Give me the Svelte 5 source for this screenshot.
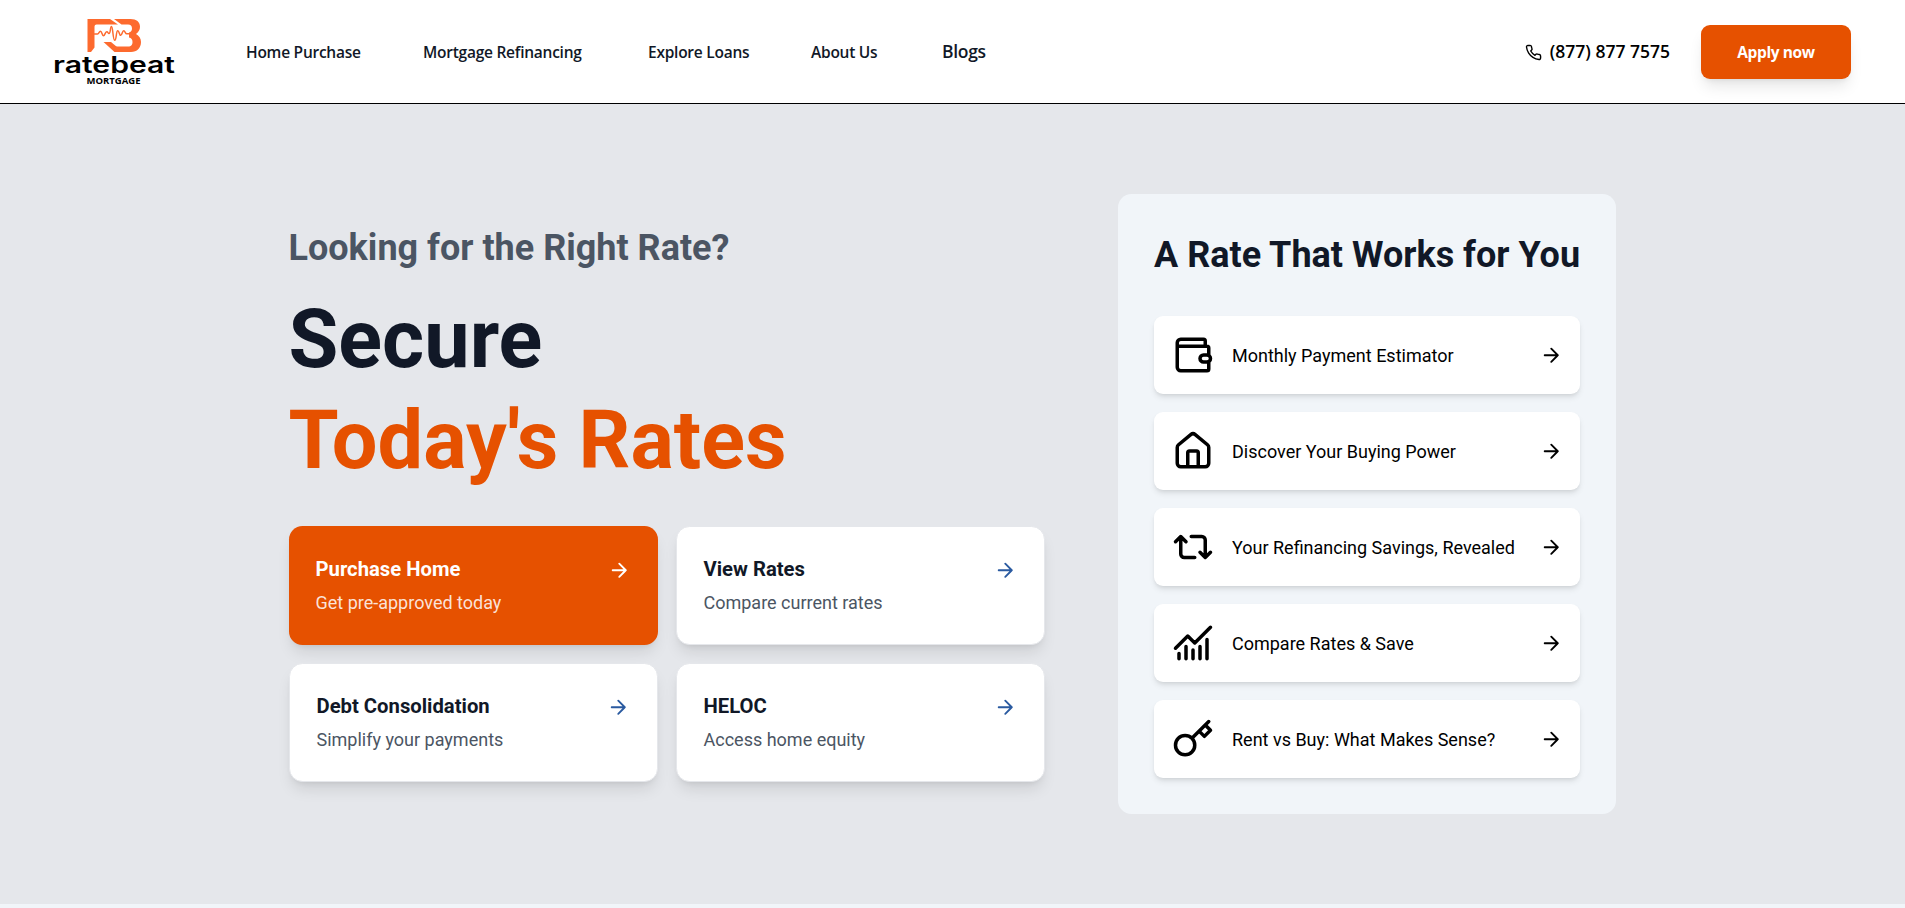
<script lang="ts">
	const links = [
		{ label: 'Home Purchase', width: 114 },
		{ label: 'Mortgage Refinancing', width: 162 },
		{ label: 'Explore Loans', width: 100 },
		{ label: 'About Us', width: 68 }
	];

	const options = [
		{ title: 'Purchase Home', text: 'Get pre-approved today', primary: true },
		{ title: 'View Rates', text: 'Compare current rates' },
		{ title: 'Debt Consolidation', text: 'Simplify your payments' },
		{ title: 'HELOC', text: 'Access home equity' }
	];

	const tools = [
		{
			label: 'Monthly Payment Estimator',
			icon: 'M19 7V4a1 1 0 0 0-1-1H5a2 2 0 0 0-2 2v14a2 2 0 0 0 2 2h15a1 1 0 0 0 1-1v-4M3 7h17a1 1 0 0 1 1 1v4M18 12h2a2 2 0 0 1 2 2v0a2 2 0 0 1-2 2h-2a2 2 0 0 1-2-2v0a2 2 0 0 1 2-2z'
		},
		{
			label: 'Discover Your Buying Power',
			icon: 'M5 21h14a2 2 0 0 0 2-2V9.97a2 2 0 0 0-.72-1.54l-7-5.83a2 2 0 0 0-2.56 0l-7 5.83A2 2 0 0 0 3 9.97V19a2 2 0 0 0 2 2zM9 21v-8a1 1 0 0 1 1-1h4a1 1 0 0 1 1 1v8'
		},
		{
			label: 'Your Refinancing Savings, Revealed',
			icon: 'M13 18H7a2 2 0 0 1-2-2V6M2 9l3-3 3 3M11 6h6a2 2 0 0 1 2 2v10M22 15l-3 3-3-3'
		},
		{
			label: 'Compare Rates & Save',
			icon: 'M2 15l7-7 4 4 9-9M4 18v3M8 14v7M12 16v5M16 14v7M20 10v11'
		},
		{
			label: 'Rent vs Buy: What Makes Sense?',
			icon: 'M2 15.5a5.5 5.5 0 1 0 11 0a5.5 5.5 0 1 0-11 0M21 2l-9.6 9.6M15.5 7.5l3 3L22 7l-3-3'
		}
	];
</script>

{#snippet arrow()}
	<svg class="arrow" viewBox="0 0 24 24" aria-hidden="true">
		<path d="M5 12h14M12 5l7 7-7 7" />
	</svg>
{/snippet}

<header>
	<a class="logo" href="/" aria-label="ratebeat mortgage">
		<svg width="122" height="72" viewBox="53 16 122 72">
			<g fill="#fd6a2e">
				<path d="M87.5 19H110l8 5.500H96.500q-2 0-2 2V47.500l-3.500 4.500h-3.500z" />
				<path d="M114 19h16.500c6 0 9.500 3 9.500 7.700 0 3-1.500 5.500-4 7.300 3 1.600 5 4.400 5 8 0 6-4 10-10 10h-11l-7-5.500H128c3.500 0 4.500-1.800 4.500-4.500 0-2.400-1.200-4-3.500-4.500v-5c2-.6 3-2 3-4 0-2.500-1.300-4-4-4h-6.500z" />
				<path d="M103.500 42h7.500l12 10h-8.500z" />
			</g>
			<path class="pulse" d="M94.500 34h3c1.500 0 1.500-2.700 3-2.700s1.500 4.500 3 4.500 1.500-4 3.200-4 1 1.700 2.300 1.700c1.800 0 1-7 2.500-7s1.300 13.800 3.200 13.800 1.300-9.500 3-9.500 1.500 4.500 3 4.500 1.500-4.500 3-4.500 1.500 3 3 3h5" />
			<text x="53" y="73" font-family="Inter, sans-serif" font-size="22.500" font-weight="600" textLength="122" lengthAdjust="spacingAndGlyphs">ratebeat</text>
			<text x="86.500" y="83.700" font-family="Open Sans, sans-serif" font-size="8.400" font-weight="bold" textLength="54" lengthAdjust="spacingAndGlyphs">MORTGAGE</text>
		</svg>
	</a>
	<nav>
		{#each links as link}
			<a href="/" style:width="{link.width}px">{link.label}</a>
		{/each}
		<a class="blogs" href="/">Blogs</a>
	</nav>
	<a class="phone" href="tel:8778777575">
		<svg viewBox="0 0 24 24" aria-hidden="true">
			<path d="M22 16.920v3a2 2 0 0 1-2.180 2 19.790 19.790 0 0 1-8.630-3.070 19.500 19.500 0 0 1-6-6 19.790 19.790 0 0 1-3.070-8.670A2 2 0 0 1 4.110 2h3a2 2 0 0 1 2 1.720 12.840 12.840 0 0 0 .7 2.810 2 2 0 0 1-.45 2.110L8.090 9.910a16 16 0 0 0 6 6l1.270-1.270a2 2 0 0 1 2.110-.45 12.840 12.840 0 0 0 2.810.7A2 2 0 0 1 22 16.920z" />
		</svg>
		<span>(877) 877 7575</span>
	</a>
	<a class="apply" href="/">Apply now</a>
</header>

<main>
	<section class="intro">
		<h2>Looking for the Right Rate?</h2>
		<h1>Secure<br /><span>Today's Rates</span></h1>
		<div class="options">
			{#each options as option}
				<a class="option" class:primary={option.primary} href="/">
					<span class="option-title">{option.title}{@render arrow()}</span>
					<span class="option-text">{option.text}</span>
				</a>
			{/each}
		</div>
	</section>

	<section class="panel">
		<h2>A Rate That Works for You</h2>
		<div class="tools">
			{#each tools as tool}
				<a class="tool" href="/">
					<svg class="tool-icon" viewBox="0 0 24 24" aria-hidden="true">
						<path d={tool.icon} />
					</svg>
					<span>{tool.label}</span>
					{@render arrow()}
				</a>
			{/each}
		</div>
	</section>
</main>

<style>
	:global(body) {
		margin: 0;
		background: #f1f5f9;
		font-family: Roboto, sans-serif;
		font-size: 18px;
		line-height: 27px;
		overflow: hidden;
	}

	a {
		color: inherit;
		text-decoration: none;
	}

	svg {
		display: block;
		flex: none;
	}

	header {
		display: flex;
		align-items: center;
		box-sizing: border-box;
		height: 104px;
		padding: 0 54px;
		background: #fff;
		border-bottom: 1px solid #000;
		font-family: 'Open Sans', sans-serif;
		font-weight: 600;
	}

	.logo {
		margin: 0 71px 0 -1px;
	}

	.pulse {
		fill: none;
		stroke: #fd6a2e;
		stroke-width: 1.5;
		stroke-linecap: round;
	}

	nav {
		display: flex;
		align-items: baseline;
		gap: 63px;
		color: #111827;
		font-size: 15.5px;
		letter-spacing: -0.25px;
		white-space: nowrap;
	}

	.blogs {
		font-size: 17.5px;
		letter-spacing: -0.3px;
	}

	.phone {
		display: flex;
		align-items: center;
		gap: 8px;
		margin-left: auto;
		color: #000;
		font-size: 17.5px;
		letter-spacing: 0;
	}

	.phone svg {
		width: 17px;
		height: 17px;
		margin-top: 2px;
		fill: none;
		stroke: currentColor;
		stroke-width: 2;
		stroke-linejoin: round;
	}

	.apply {
		box-sizing: border-box;
		width: 150px;
		height: 54px;
		margin-left: 31px;
		border-radius: 9px;
		background: #e65100;
		box-shadow: 0 10px 15px -3px rgb(0 0 0 / 0.1), 0 4px 6px -4px rgb(0 0 0 / 0.1);
		color: #fff;
		font-size: 15.5px;
		font-weight: 700;
		letter-spacing: -0.4px;
		line-height: 54px;
		text-align: center;
	}

	main {
		display: flex;
		justify-content: space-between;
		align-items: center;
		box-sizing: border-box;
		height: 800px;
		padding: 0 289px 0 288.5px;
		background: #e5e7eb;
	}

	h1,
	h2 {
		margin: 0;
		color: #111827;
		font-weight: 700;
	}

	h2 {
		font-size: 36px;
	}

	.intro {
		width: 756px;
	}

	.intro h2 {
		color: #4b5563;
		line-height: 45px;
	}

	h1 {
		margin: 18px 0 35px;
		font-size: 81px;
		line-height: 101.25px;
	}

	h1 span {
		color: #e65100;
	}

	.options {
		display: grid;
		grid-template-columns: 1fr 1fr;
		gap: 18px;
	}

	.option {
		display: flex;
		flex-direction: column;
		justify-content: center;
		gap: 3.5px;
		padding: 27px 27px 28px;
		border: 1px solid #e5e7eb;
		border-radius: 13.5px;
		background: #fff;
		box-shadow: 0 10px 15px -3px rgb(0 0 0 / 0.1), 0 4px 6px -4px rgb(0 0 0 / 0.1);
	}

	.option-title {
		display: flex;
		justify-content: space-between;
		align-items: center;
		color: #111827;
		font-size: 20.25px;
		font-weight: 700;
		line-height: 31.5px;
	}

	.option-text {
		color: #4b5563;
	}

	.option .arrow {
		color: #2a5aa0;
	}

	.option.primary {
		border: 0;
		background: #e65100;
	}

	.primary .option-title,
	.primary .arrow {
		color: #fff;
	}

	.primary .option-text {
		color: rgb(255 255 255 / 0.85);
	}

	.arrow {
		width: 22.5px;
		height: 22.5px;
		fill: none;
		stroke: currentColor;
		stroke-width: 2;
		stroke-linecap: round;
		stroke-linejoin: round;
	}

	.panel {
		box-sizing: border-box;
		width: 498px;
		padding: 36px;
		border-radius: 13.5px;
		background: #f1f5f9;
	}

	.panel h2 {
		margin-bottom: 36px;
		line-height: 50px;
		white-space: nowrap;
	}

	.tools {
		display: flex;
		flex-direction: column;
		gap: 18px;
	}

	.tool {
		display: flex;
		align-items: center;
		gap: 18px;
		padding: 18px;
		border-radius: 9px;
		background: #fff;
		box-shadow: 0 4px 6px -1px rgb(0 0 0 / 0.1), 0 2px 4px -2px rgb(0 0 0 / 0.1);
		color: #000;
	}

	.tool .arrow {
		margin-left: auto;
	}

	.tool-icon {
		width: 42px;
		height: 42px;
		fill: none;
		stroke: currentColor;
		stroke-width: 2;
		stroke-linecap: round;
		stroke-linejoin: round;
	}
</style>
